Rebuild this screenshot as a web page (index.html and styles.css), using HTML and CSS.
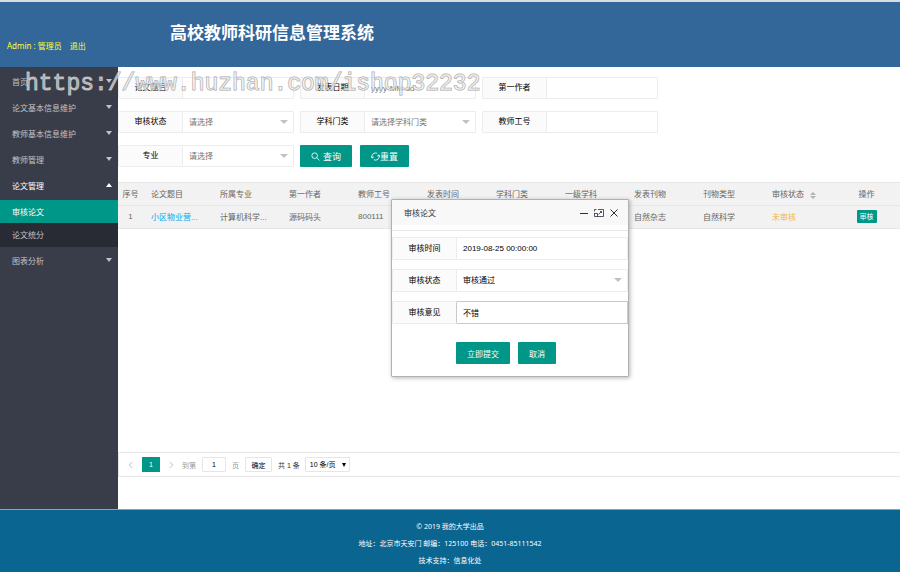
FILE: index.html
```
<!DOCTYPE html>
<html lang="zh-CN">
<head>
	<meta charset="UTF-8">
	<meta name="viewport" content="width=device-width, initial-scale=1.0">
	<title>高校教师科研信息管理系统</title>
	<link rel="stylesheet" href="styles.css">
</head>
<body>

	<header class="header">
		<div class="user">
			<span>Admin : 管理员</span>
			<a href="#">退出</a>
		</div>
		<h1 class="title">高校教师科研信息管理系统</h1>
	</header>

	<div class="wrapper">
		<nav class="side">
			<ul class="menu">
				<li><a href="#">首页<i class="caret"></i></a></li>
				<li><a href="#">论文基本信息维护<i class="caret"></i></a></li>
				<li><a href="#">教师基本信息维护<i class="caret"></i></a></li>
				<li><a href="#">教师管理<i class="caret"></i></a></li>
				<li>
					<a class="open" href="#">论文管理<i class="caret up"></i></a>
					<ul class="submenu">
						<li><a class="this" href="#">审核论文</a></li>
						<li><a href="#">论文统分</a></li>
					</ul>
				</li>
				<li><a href="#">图表分析<i class="caret"></i></a></li>
			</ul>
		</nav>

		<main class="main">
			<form class="search">
				<div class="row">
					<div class="field">
						<label for="subject">论文题目</label>
						<input type="text" id="subject">
					</div>
					<div class="field">
						<label for="pubdate">发表日期</label>
						<input type="text" id="pubdate" placeholder="yyyy-MM-dd">
					</div>
					<div class="field">
						<label for="author">第一作者</label>
						<input type="text" id="author">
					</div>
				</div>
				<div class="row">
					<div class="field select">
						<label for="status">审核状态</label>
						<select id="status"><option>请选择</option></select>
					</div>
					<div class="field select">
						<label for="category">学科门类</label>
						<select id="category"><option>请选择学科门类</option></select>
					</div>
					<div class="field">
						<label for="teacher">教师工号</label>
						<input type="text" id="teacher">
					</div>
				</div>
				<div class="row">
					<div class="field select">
						<label for="major">专业</label>
						<select id="major"><option>请选择</option></select>
					</div>
					<div class="buttons">
						<button class="btn" type="button">
							<svg class="icon" viewBox="0 0 16 16"><circle cx="6.5" cy="6.5" r="5"/><path d="M10.3 10.3L15 15"/></svg>
							查询
						</button>
						<button class="btn tight" type="reset">
							<svg class="icon" viewBox="0 0 16 16"><path d="M2 10.5A6.5 6.5 0 0 1 11 2.3M14 5.5A6.5 6.5 0 0 1 5 13.8M.3 7.5L2 10.7l3-1.8M15.7 8.5L14 5.300l-3 1.800"/></svg>
							重置
						</button>
					</div>
				</div>
			</form>

			<div class="tablebox">
				<table class="table">
					<thead>
						<tr>
							<th class="num">序号</th>
							<th>论文题目</th>
							<th>所属专业</th>
							<th>第一作者</th>
							<th>教师工号</th>
							<th>发表时间</th>
							<th>学科门类</th>
							<th>一级学科</th>
							<th>发表刊物</th>
							<th>刊物类型</th>
							<th>审核状态<span class="sort"></span></th>
							<th class="act">操作</th>
						</tr>
					</thead>
					<tbody>
						<tr>
							<td class="num">1</td>
							<td><a href="#">小区物业营...</a></td>
							<td>计算机科学...</td>
							<td>源码码头</td>
							<td>800111</td>
							<td></td>
							<td></td>
							<td></td>
							<td>自然杂志</td>
							<td>自然科学</td>
							<td class="wait">未审核</td>
							<td class="act"><button class="btn mini" type="button">审核</button></td>
						</tr>
					</tbody>
				</table>
			</div>

			<div class="pager">
				<a class="arrow" href="#" aria-label="上一页"><svg viewBox="0 0 8 12"><path d="M7 1L2 6l5 5"/></svg></a>
				<a class="current" href="#">1</a>
				<a class="arrow" href="#" aria-label="下一页"><svg viewBox="0 0 8 12"><path d="M1 1l5 5-5 5"/></svg></a>
				<label for="page">到第</label>
				<input type="text" id="page" value="1">
				<span>页</span>
				<button type="button">确定</button>
				<span class="count">共 1 条</span>
				<div class="limit">
					<select aria-label="每页条数"><option>10 条/页</option></select>
				</div>
			</div>

			<section class="layer" role="dialog" aria-labelledby="layer-title">
				<div class="layer-head">
					<h2 id="layer-title">审核论文</h2>
					<button type="button" aria-label="最小化"><svg viewBox="0 0 10 10"><path d="M1 5.500h8"/></svg></button>
					<button type="button" aria-label="最大化"><svg class="thin" viewBox="0 0 10 10"><path d="M4 1.500h5.500v7h-9V5M.5 3.500v-2H2.500M.5 5.500h3v3M6 3.500h1.500V5M7.500 3.500l-3 3"/></svg></button>
					<button type="button" aria-label="关闭"><svg viewBox="0 0 10 10"><path d="M1.500 1.500l7 7M8.500 1.500l-7 7"/></svg></button>
				</div>
				<form class="layer-form">
					<div class="field">
						<label for="ctime">审核时间</label>
						<input type="text" id="ctime" value="2019-08-25 00:00:00">
					</div>
					<div class="field select">
						<label for="cstatus">审核状态</label>
						<select id="cstatus"><option>审核通过</option></select>
					</div>
					<div class="field active">
						<label for="opinion">审核意见</label>
						<input type="text" id="opinion" value="不错" autofocus>
					</div>
					<div class="layer-btns">
						<button class="btn" type="button">立即提交</button>
						<button class="btn" type="button">取消</button>
					</div>
				</form>
			</section>
		</main>
	</div>

	<footer class="footer">
		<p>© 2019 我的大学出品</p>
		<p>地址：北京市天安门 邮编：125100 电话：0451-85111542</p>
		<p>技术支持：信息化处</p>
	</footer>

	<div class="watermark">https://www.huzhan.com/ishop32232</div>

</body>
</html>
```
FILE: styles.css
```
:root {
	--green:	#009688;
	--line:		#e6e6e6;
	--side:		#393d49;
	--sans:		"Liberation Sans", "Noto Sans CJK SC", sans-serif;
}

* {
	padding:		0;
	margin:			0;
	box-sizing:		border-box;
}

body {
	display:		flex;
	flex-direction:		column;
	min-height:		100vh;
	position:		relative;
	background:		white;
	font-family:		var(--sans);
	font-size:		8px;
	color:			#666;
}

a {
	color:			inherit;
	text-decoration:	none;
}

ul {
	list-style:		none;
}

input, select, button {
	font-family:		inherit;
	font-size:		8px;
	color:			inherit;
	border:			none;
	outline:		none;
	background:		none;
}

button {
	cursor:			pointer;
}

svg {
	fill:			none;
	stroke:			currentColor;
}

/* header */
.header {
	display:		flex;
	height:			67px;
	border-top:		2px solid #d8dde2;
	background:		#336699;
}

.user {
	display:		flex;
	gap:			8px;
	width:			170px;
	padding:		38px 0 0 7px;
	line-height:		12px;
	font-family:		"Noto Sans", "Noto Sans CJK SC", sans-serif;
	color:			#ffff33;
}

.title {
	padding-top:		19px;
	line-height:		26px;
	font-size:		17px;
	color:			white;
}

/* left menu */
.wrapper {
	display:		flex;
	flex:			1;
}

.side {
	width:			118px;
	padding-top:		1px;
	background:		var(--side);
	color:			#c2c3c7;
}

.menu a {
	display:		flex;
	align-items:		center;
	justify-content:	space-between;
	height:			26px;
	padding:		0 6px 0 12px;
}

.menu .open {
	color:			white;
}

.caret {
	border:			3px solid transparent;
	border-top:		4px solid #c2c3c7;
	border-bottom:		none;
}

.caret.up {
	border-top:		none;
	border-bottom:		4px solid white;
}

.submenu {
	margin-top:		2px;
	padding-bottom:		1px;
	background:		#282b33;
}

.menu .submenu a {
	height:			23px;
}

.submenu .this {
	background:		var(--green);
	color:			white;
}

/* search form */
.main {
	flex:			1;
	display:		flex;
	flex-direction:		column;
	position:		relative;
	padding:		10px 0 32px;
}

.search {
	display:		flex;
	flex-direction:		column;
	gap:			12px;
	margin-bottom:		15px;
}

.row {
	display:		flex;
	gap:			6px;
}

.field {
	display:		flex;
	position:		relative;
	width:			176px;
	height:			22px;
	border:			1px solid #ececec;
	border-radius:		1px;
}

.field label {
	width:			64px;
	line-height:		20px;
	text-align:		center;
	background:		#fbfbfb;
	border-right:		1px solid #ececec;
	color:			black;
}

.field input, .field select {
	flex:			1;
	min-width:		0;
	padding:		0 6px;
	appearance:		none;
}

.search select {
	color:			#757575;
}

.field input::placeholder {
	color:			#757575;
}

.field.select::after {
	content:		"";
	position:		absolute;
	right:			5px;
	top:			8px;
	border:			4px solid transparent;
	border-top-color:	#c2c2c2;
	border-bottom:		none;
	pointer-events:		none;
}

.buttons {
	display:		flex;
	gap:			8px;
}

.btn {
	display:		flex;
	align-items:		center;
	gap:			3px;
	height:			22px;
	padding:		0 11px;
	border-radius:		1px;
	background:		var(--green);
	color:			white;
}

.buttons .btn {
	font-size:		9px;
}

.btn.tight {
	gap:			0;
}

.icon {
	width:			9px;
	height:			9px;
	stroke-width:		1.5;
}

/* table */
.tablebox {
	flex:			1;
	border-top:		1px solid var(--line);
}

.table {
	width:			100%;
	table-layout:		fixed;
	border-collapse:	collapse;
	background:		#f2f2f2;
}

.table th, .table td {
	height:			23px;
	padding:		0 0 0 8px;
	border-bottom:		1px solid var(--line);
	font-weight:		normal;
	text-align:		left;
	white-space:		nowrap;
}

.table th {
	height:			22px;
}

.table .num {
	width:			25px;
	padding:		0;
	text-align:		center;
}

.table .act {
	width:			67px;
	padding:		0;
	text-align:		center;
}

.table a {
	color:			#01aaed;
}

.table .wait {
	color:			#f0b83e;
}

.sort {
	display:		inline-block;
	width:			6px;
	margin-left:		6px;
	vertical-align:		middle;
}

.sort::before, .sort::after {
	content:		"";
	display:		block;
	border:			3px solid transparent;
	border-top:		none;
	border-bottom-color:	#b2b2b2;
}

.sort::after {
	margin-top:		1px;
	border-top:		3px solid #b2b2b2;
	border-bottom:		none;
}

.btn.mini {
	display:		inline-block;
	height:			13px;
	padding:		0 3px;
	font-size:		7px;
	line-height:		13px;
	vertical-align:		middle;
}

/* pager */
.pager {
	display:		flex;
	align-items:		center;
	height:			25px;
	padding-left:		9px;
	border:			1px solid var(--line);
	border-right:		none;
	font-size:		7px;
	color:			#333;
}

.pager input, .pager button, .pager select {
	height:			15px;
	font-size:		7px;
	border:			1px solid var(--line);
	border-radius:		1px;
	color:			black;
}

.arrow {
	display:		flex;
	color:			#bbb;
}

.arrow svg {
	width:			5px;
	height:			8px;
	stroke-width:		1.5;
}

.current {
	width:			18px;
	margin:			0 9px;
	line-height:		15px;
	text-align:		center;
	background:		var(--green);
	color:			white;
}

.pager label {
	margin-left:		8px;
	color:			#999;
}

.pager input {
	width:			24px;
	margin:			0 6px;
	text-align:		center;
}

.pager input + span {
	color:			#999;
}

.pager button {
	width:			27px;
	margin:			0 6px;
}

.limit {
	position:		relative;
	margin-left:		5px;
}

.limit select {
	width:			45px;
	padding-left:		4px;
	appearance:		none;
}

.limit::after {
	content:		"";
	position:		absolute;
	right:			4px;
	top:			6px;
	border:			2px solid transparent;
	border-top:		4px solid black;
	border-bottom:		none;
	pointer-events:		none;
}

/* popup */
.layer {
	position:		absolute;
	inset:			0 0 0 2px;
	margin:			auto;
	width:			238px;
	height:			fit-content;
	background:		white;
	border:			1px solid #b2b2b2;
	border-radius:		1px;
	box-shadow:		1px 1px 4px rgba(0,0,0,.3);
}

.layer-head {
	display:		flex;
	align-items:		center;
	gap:			5px;
	height:			25px;
	padding:		0 9px 0 12px;
	background:		#f8f8f8;
	color:			#333;
}

.layer-head h2 {
	flex:			1;
	font-size:		8px;
	font-weight:		normal;
}

.layer-head button {
	display:		flex;
	color:			#2d2c3b;
}

.layer-head svg {
	width:			10px;
	height:			10px;
}

.layer-head .thin {
	stroke-width:		.8;
}

.layer-form {
	display:		flex;
	flex-direction:		column;
	gap:			9px;
	margin-top:		5px;
	padding:		6px 0 12px;
	border-top:		1px solid var(--line);
	color:			black;
}

.layer-form .field {
	width:			100%;
	height:			23px;
}

.layer-form label {
	line-height:		21px;
}

.layer-form .active input {
	margin:			-1px -1px -1px 0;
	border:			1px solid #c9c9c9;
	border-left:		none;
}

.layer-form .active label {
	border-right-color:	#c9c9c9;
}

.layer-btns {
	display:		flex;
	gap:			8px;
	padding:		9px 0 0 64px;
}

/* footer */
.footer {
	height:			63px;
	padding-top:		8px;
	border-top:		1px solid #7fa8c0;
	background:		#0a6591;
	color:			white;
	font-family:		"Noto Sans", "Noto Sans CJK SC", sans-serif;
	font-size:		7px;
	line-height:		17px;
	text-align:		center;
}

/* text over the page */
.watermark {
	position:		absolute;
	left:			25px;
	top:			70px;
	font-family:		"Liberation Mono", monospace;
	font-size:		23px;
	line-height:		28px;
	color:			rgba(255,255,255,.5);
	-webkit-text-stroke:	1px #a8a8a8;
	paint-order:		stroke fill;
	pointer-events:		none;
}
```
